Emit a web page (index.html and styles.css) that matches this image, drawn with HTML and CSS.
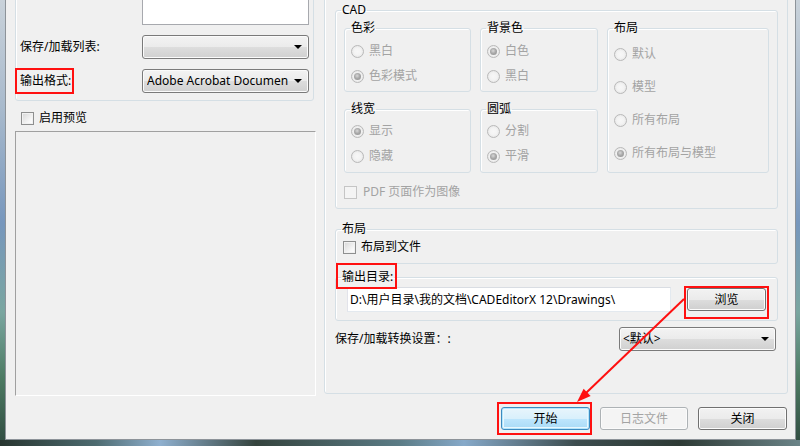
FILE: index.html
```html
<!DOCTYPE html>
<html>
<head>
<meta charset="utf-8">
<link rel="stylesheet" href="styles.css">
</head>
<body>
<div class="window">
  <div class="main">
    <div class="leftcol">
      <div class="lgroup">
        <div class="lgrid">
          <span></span><div class="listbox"></div>
          <span class="lbl">保存/加载列表:</span>
          <div class="combo"><span class="ctext"></span><span class="arrow"></span></div>
          <span class="lbl"><span class="mark mark-fmt">输出格式:</span></span>
          <div class="combo"><span class="ctext">Adobe Acrobat Documen</span><span class="arrow"></span></div>
        </div>
      </div>
      <div class="chkrow chk-preview"><span class="chk"></span><span>启用预览</span></div>
      <div class="preview"></div>
    </div>

    <div class="rpanel">
      <fieldset class="grp cad">
        <legend>CAD</legend>
        <div class="cadbody">
          <div class="cadgrid">
            <fieldset class="sub">
              <legend>色彩</legend>
              <div class="radios r1">
                <div class="ritem"><span class="radio"></span>黑白</div>
                <div class="ritem"><span class="radio on"></span>色彩模式</div>
              </div>
            </fieldset>
            <fieldset class="sub">
              <legend>背景色</legend>
              <div class="radios r1">
                <div class="ritem"><span class="radio on"></span>白色</div>
                <div class="ritem"><span class="radio"></span>黑白</div>
              </div>
            </fieldset>
            <fieldset class="sub tall">
              <legend>布局</legend>
              <div class="radios r3">
                <div class="ritem"><span class="radio"></span>默认</div>
                <div class="ritem"><span class="radio"></span>模型</div>
                <div class="ritem"><span class="radio"></span>所有布局</div>
                <div class="ritem"><span class="radio on"></span>所有布局与模型</div>
              </div>
            </fieldset>
            <fieldset class="sub">
              <legend>线宽</legend>
              <div class="radios r2">
                <div class="ritem"><span class="radio on"></span>显示</div>
                <div class="ritem"><span class="radio"></span>隐藏</div>
              </div>
            </fieldset>
            <fieldset class="sub">
              <legend>圆弧</legend>
              <div class="radios r2">
                <div class="ritem"><span class="radio"></span>分割</div>
                <div class="ritem"><span class="radio on"></span>平滑</div>
              </div>
            </fieldset>
          </div>
          <div class="chkrow dis pdf"><span class="chk dis"></span><span>PDF 页面作为图像</span></div>
        </div>
      </fieldset>

      <fieldset class="grp layout">
        <legend>布局</legend>
        <div class="layoutbody">
          <div class="chkrow"><span class="chk"></span><span>布局到文件</span></div>
        </div>
      </fieldset>

      <fieldset class="grp outdir">
        <legend><span class="mark mark-dir">输出目录:</span></legend>
        <div class="dirrow">
          <div class="textbox">D:\用户目录\我的文档\CADEditorX 12\Drawings\</div>
          <span class="mark mark-browse"><button class="btn browse">浏览</button></span>
        </div>
      </fieldset>

      <div class="saverow">
        <span>保存/加载转换设置：:</span>
        <div class="combo combo-def"><span class="ctext">&lt;默认&gt;</span><span class="arrow"></span></div>
      </div>
    </div>
  </div>

  <div class="footer">
    <span class="mark mark-start"><button class="btn default">开始</button></span>
    <button class="btn" disabled>日志文件</button>
    <button class="btn">关闭</button>
  </div>
</div>

<svg class="ann-arrow" width="800" height="446" viewBox="0 0 800 446">
  <line x1="684" y1="299" x2="586" y2="393" stroke="#ff1010" stroke-width="2"/>
  <polygon points="577,402 590.6,395.9 583.6,388.7" fill="#ff1010"/>
</svg>
</body>
</html>
```

FILE: styles.css
```css
html, body {
  margin: 0;
  padding: 0;
}

body {
  width: 800px;
  height: 446px;
  overflow: hidden;
  position: relative;
  font: 12px/16px "Noto Sans", "Noto Sans CJK SC", sans-serif;
  color: #000;
  background:
    linear-gradient(90deg, #27352f 0%, #4d6b70 12%, #8fb0cf 20%, #34433d 32%, #5b7c86 50%, #86a9c9 58%, #3c4c4e 72%, #2d3a35 85%, #6b8488 100%) left bottom / 100% 6px no-repeat,
    linear-gradient(180deg, #c9d2da 0%, #a7b9cc 25%, #7797bd 50%, #7aa6a0 70%, #4c7a62 85%, #2f4a40 100%);
}

.window {
  box-sizing: border-box;
  width: 791px;
  height: 452px;
  margin: -12px 0 0 5px;
  background: #f0f0f0;
  border: 1px solid #8d9399;
  border-top: none;
  padding: 0 7px 0 9px;
  display: flex;
  flex-direction: column;
}

.main {
  display: grid;
  grid-template-columns: 301px 464px;
  column-gap: 8px;
  height: 408px;
}

/* ---------- left column ---------- */
.leftcol {
  display: flex;
  flex-direction: column;
}

.lgroup {
  box-sizing: border-box;
  width: 299px;
  height: 113px;
  border: 1px solid #d5dfe5;
  border-radius: 3px;
  box-shadow: inset 1px 1px 0 #fff;
  padding: 3px 4px 0 4px;
}

.lgrid {
  display: grid;
  grid-template-columns: 122px 167px;
  row-gap: 10px;
  align-items: center;
}

.listbox {
  box-sizing: border-box;
  height: 33px;
  background: #fff;
  border: 1px solid #a7a9ae;
}

.lbl {
  white-space: nowrap;
}

.combo {
  box-sizing: border-box;
  height: 24px;
  display: flex;
  align-items: center;
  padding: 0 6px 0 4px;
  border: 1px solid #7a7a7a;
  border-radius: 3px;
  background: linear-gradient(#f3f3f3 0%, #ebebeb 50%, #dddddd 51%, #d0d0d0 100%);
  box-shadow: inset 0 0 0 1px #fbfbfb;
}

.ctext {
  flex: 1;
  white-space: nowrap;
  overflow: hidden;
}

.arrow {
  width: 0;
  height: 0;
  border-left: 4px solid transparent;
  border-right: 4px solid transparent;
  border-top: 4px solid #000;
  flex: none;
}

.chkrow {
  display: flex;
  align-items: center;
  height: 14px;
  white-space: nowrap;
}

.chkrow .chk {
  margin-right: 5px;
}

.chk-preview {
  margin-top: 10px;
  padding-left: 6px;
}

.chk {
  box-sizing: border-box;
  width: 13px;
  height: 13px;
  flex: none;
  border: 1px solid #8e8f8f;
  background: linear-gradient(135deg, #d6d6d6 0%, #f7f7f7 70%, #ffffff 100%);
  box-shadow: inset 0 0 0 1px #f1f1f1;
}

.chk.dis {
  border-color: #c5c5c5;
  background: #f4f4f4;
  box-shadow: none;
}

.dis {
  color: #a3a3a3;
}

.preview {
  box-sizing: border-box;
  margin-top: 6px;
  height: 265px;
  border: 1px solid;
  border-color: #a0a0a0 #ffffff #ffffff #a0a0a0;
}

/* ---------- right panel ---------- */
.rpanel {
  box-sizing: border-box;
  height: 406px;
  border: 1px solid #d5dfe5;
  border-radius: 3px;
  box-shadow: inset 1px 1px 0 #fff;
  padding: 13px 9px 0 10px;
  display: flex;
  flex-direction: column;
}

fieldset {
  margin: 0;
  padding: 0;
  min-width: 0;
  border: 1px solid #d5dfe5;
  border-radius: 3px;
  box-shadow: inset 1px 1px 0 #fff;
}

legend {
  margin-left: 5px;
  padding: 0 1px;
  line-height: 16px;
  white-space: nowrap;
}

.cad {
  box-sizing: border-box;
  height: 207px;
}

.cadbody {
  padding: 2px 8px 9px 8px;
}

.cadgrid {
  display: grid;
  grid-template-columns: 127px 118px 162px;
  grid-template-rows: 72px 72px;
  gap: 9px;
}

.sub.tall {
  grid-column: 3;
  grid-row: 1 / 3;
}

.radios {
  display: flex;
  flex-direction: column;
  padding-left: 6px;
  color: #a3a3a3;
}

.radios.r1 { padding-top: 7px; gap: 9px; }
.radios.r2 { padding-top: 6px; gap: 9px; }
.radios.r3 { padding-top: 10px; gap: 17px; }

.ritem {
  display: flex;
  align-items: center;
  height: 16px;
  white-space: nowrap;
}

.radio {
  position: relative;
  box-sizing: border-box;
  width: 13px;
  height: 13px;
  flex: none;
  margin-right: 5px;
  border: 1px solid #b9b9b9;
  border-radius: 50%;
  background: radial-gradient(circle at 50% 50%, #f7f7f7 0%, #f3f3f3 45%, #dedede 100%);
}

.radio.on::after {
  content: "";
  position: absolute;
  left: 2px;
  top: 2px;
  width: 7px;
  height: 7px;
  border-radius: 50%;
  background: radial-gradient(circle at 45% 40%, #d8d8d8 0%, #a9a9a9 45%, #8c8c8c 100%);
}

.pdf {
  margin-top: 12px;
}

.pdf .chk {
  margin-right: 6px;
}

.layout {
  margin-top: 12px;
}

.layoutbody {
  padding: 2px 0 8px 7px;
}

.layoutbody .chkrow {
  height: 16px;
}

.outdir {
  margin-top: 5px;
}

.dirrow {
  display: flex;
  align-items: center;
  height: 25px;
  padding: 2px 11px 8px 11px;
}

.textbox {
  box-sizing: border-box;
  width: 324px;
  height: 25px;
  padding: 0 2px;
  display: flex;
  align-items: center;
  background: #fff;
  border: 1px solid;
  border-color: #d9dde3 #e3e9ef #e3e9ef #e2e3ea;
  white-space: nowrap;
  overflow: hidden;
}

.saverow {
  display: flex;
  align-items: center;
  margin-top: 6px;
  padding-right: 2px;
  white-space: nowrap;
}

.combo-def {
  width: 157px;
  margin-left: auto;
  padding-left: 3px;
}

/* ---------- buttons ---------- */
.footer {
  display: flex;
  justify-content: flex-end;
  gap: 10px;
  padding: 11px 1px 0 0;
}

.btn {
  box-sizing: border-box;
  width: 88px;
  height: 23px;
  padding: 0;
  font: inherit;
  color: #000;
  border: 1px solid #707070;
  border-radius: 3px;
  background: linear-gradient(#f2f2f2 0%, #ebebeb 50%, #dddddd 51%, #cfcfcf 100%);
  box-shadow: inset 0 0 0 1px #fcfcfc;
  display: block;
}

.btn:last-child {
  width: 89px;
}

.btn.browse {
  width: 79px;
}

.btn.default {
  border-color: #3c8bc0;
  background: linear-gradient(#e8f5fc 0%, #d9f0fc 50%, #bee6fd 51%, #a9dbf6 100%);
  box-shadow: inset 0 0 0 1px #b5e6fc, inset 0 0 0 2px #eaf7fd;
}

.btn[disabled] {
  color: #a3a3a3;
  border-color: #adb2b5;
  background: #f4f4f4;
  box-shadow: inset 0 0 0 1px #fbfbfb;
}

/* ---------- annotations ---------- */
.mark {
  position: relative;
  display: inline-block;
}

.mark::after {
  content: "";
  position: absolute;
  border: 2px solid #ff1010;
  pointer-events: none;
}

.mark-fmt::after { left: -5px; right: -3px; top: -5px; bottom: -5px; }
.mark-dir::after { left: -6px; right: -4px; top: -6px; bottom: -4px; }
.mark-browse { margin-left: auto; }
.mark-browse::after { left: -3px; right: -3px; top: -2px; bottom: -8px; }
.mark-start::after { left: -4px; right: -2px; top: -5px; bottom: -5px; }

.ann-arrow {
  position: absolute;
  left: 0;
  top: 0;
  pointer-events: none;
}
```
